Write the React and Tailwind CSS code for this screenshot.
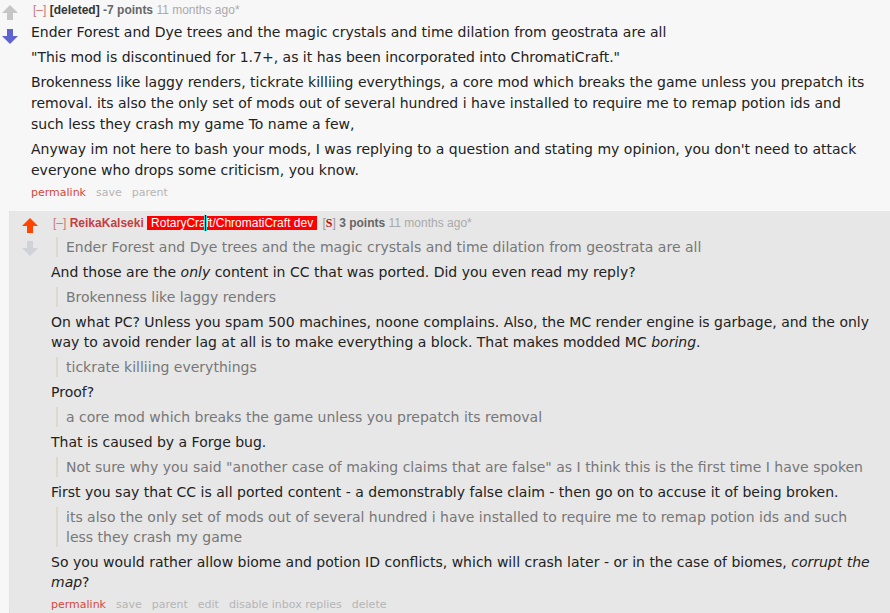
import React from "react";

function Arrow({ dir, color }) {
  return (
    <svg width="16" height="15" viewBox="0 0 16 15" className={dir === "down" ? "rotate-180" : ""}>
      <polygon points="8,0 16,8 11,8 11,15 5,15 5,8 0,8" fill={color} />
    </svg>
  );
}

function Quote({ children }) {
  return (
    <blockquote className="my-[5px] ml-[5px] border-l-2 border-[#ddd9c9] pl-[8px] text-[#777]">
      <p>{children}</p>
    </blockquote>
  );
}

function P({ children, className = "my-[5px]" }) {
  return <p className={className}>{children}</p>;
}

function Buttons({ items }) {
  return (
    <div className="flex gap-[10px] font-['DejaVu_Sans',sans-serif] text-[11px] leading-[16px] text-[#b5b5b5]">
      <span className="text-[#d6473b]">permalink</span>
      {items.map((t) => (
        <span key={t}>{t}</span>
      ))}
    </div>
  );
}

export default function App() {
  return (
    <div className="min-h-screen bg-[#f7f7f7] text-[#222] overflow-hidden">
      {/* top level comment */}
      <div className="flex pl-[2px] pt-[5px]">
        <div className="flex w-[16px] flex-col gap-[9px]">
          <Arrow dir="up" color="#c6c6c6" />
          <Arrow dir="down" color="#5f63cf" />
        </div>
        <div className="ml-[13px] mr-[18px] flex-1">
          <div className="-mt-[2px] pl-[2px] font-['Liberation_Sans',Arial,sans-serif] text-[12px] leading-[14px]">
            <span className="text-[#c77]">[–]</span>{" "}
            <span className="font-bold text-[#333]">[deleted]</span>{" "}
            <span className="font-bold text-[#666]">-7 points</span>{" "}
            <span className="text-[#aaa]">11 months ago*</span>
          </div>
          <div className="mt-[5px] font-['DejaVu_Sans',Verdana,sans-serif] text-[14px] leading-[21px] text-[#222]">
            <P className="my-[4px]">Ender Forest and Dye trees and the magic crystals and time dilation from geostrata are all</P>
            <P className="my-[4px]">"This mod is discontinued for 1.7+, as it has been incorporated into ChromatiCraft."</P>
            <P className="my-[4px]">
              Brokenness like laggy renders, tickrate killiing everythings, a core mod which breaks the game unless you
              prepatch its removal. its also the only set of mods out of several hundred i have installed to require me to
              remap potion ids and such less they crash my game To name a few,
            </P>
            <P className="my-[4px]">
              Anyway im not here to bash your mods, I was replying to a question and stating my opinion, you don't need to
              attack everyone who drops some criticism, you know.
            </P>
          </div>
          <Buttons items={["save", "parent"]} />
        </div>
      </div>

      {/* child comment */}
      <div className="ml-[9px] mt-[10px] border-l border-dotted border-[#ddd] bg-[#e7e7e7] pb-[10px]">
        <div className="flex pl-[12px] pt-[7px]">
          <div className="flex w-[16px] flex-col gap-[8px]">
            <Arrow dir="up" color="#ff4500" />
            <Arrow dir="down" color="#cfd2d7" />
          </div>
          <div className="ml-[13px] mr-[16px] flex-1">
            <div className="-mt-[2px] pl-[2px] font-['Liberation_Sans',Arial,sans-serif] text-[12px] leading-[14px]">
              <span className="text-[#c77]">[–]</span>{" "}
              <span className="font-bold text-[#c43e3e]">ReikaKalseki</span>{" "}
              <span className="relative bg-[#ff0000] px-[4px] text-white">
                RotaryCraft/ChromatiCraft dev
                <span className="absolute left-[57px] top-[-1px] h-[16px] w-[3px] border-x border-[#33e0e0] bg-black" />
              </span>{" "}
              <span className="ml-[2px] text-[#999]">
                [<span className="font-bold font-['Liberation_Serif',serif] text-[#d40000]">S</span>]
              </span>{" "}
              <span className="font-bold text-[#666]">3 points</span>{" "}
              <span className="text-[#aaa]">11 months ago*</span>
            </div>
            <div className="mt-[7px] font-['DejaVu_Sans',Verdana,sans-serif] text-[14px] leading-[20px] text-[#222]">
              <Quote>Ender Forest and Dye trees and the magic crystals and time dilation from geostrata are all</Quote>
              <P>
                And those are the <em>only</em> content in CC that was ported. Did you even read my reply?
              </P>
              <Quote>Brokenness like laggy renders</Quote>
              <P>
                On what PC? Unless you spam 500 machines, noone complains. Also, the MC render engine is garbage, and the
                only way to avoid render lag at all is to make everything a block. That makes modded MC <em>boring</em>.
              </P>
              <Quote>tickrate killiing everythings</Quote>
              <P>Proof?</P>
              <Quote>a core mod which breaks the game unless you prepatch its removal</Quote>
              <P>That is caused by a Forge bug.</P>
              <Quote>
                Not sure why you said "another case of making claims that are false" as I think this is the first time I
                have spoken
              </Quote>
              <P>
                First you say that CC is all ported content - a demonstrably false claim - then go on to accuse it of being
                broken.
              </P>
              <Quote>
                its also the only set of mods out of several hundred i have installed to require me to remap potion ids and
                such less they crash my game
              </Quote>
              <P>
                So you would rather allow biome and potion ID conflicts, which will crash later - or in the case of biomes,{" "}
                <em>corrupt the map</em>?
              </P>
            </div>
            <Buttons items={["save", "parent", "edit", "disable inbox replies", "delete"]} />
          </div>
        </div>
      </div>
    </div>
  );
}
